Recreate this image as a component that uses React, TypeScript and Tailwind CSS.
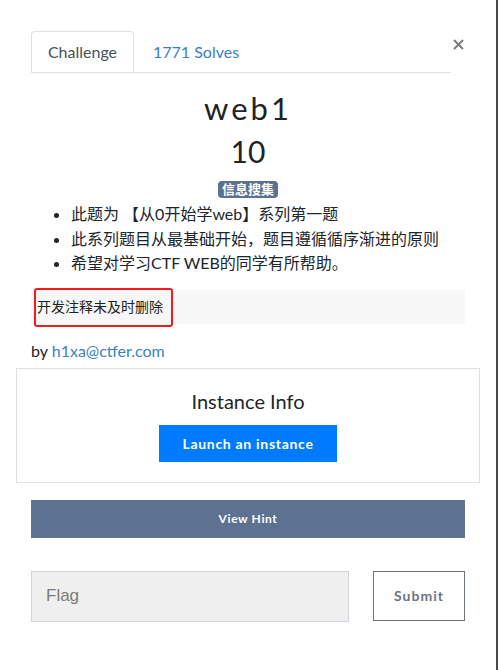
import React from "react";

const tags = ["信息搜集"];

const points = [
  "此题为 【从0开始学web】系列第一题",
  "此系列题目从最基础开始，题目遵循循序渐进的原则",
  "希望对学习CTF WEB的同学有所帮助。",
];

export default function App() {
  return (
    <div className="w-full h-[670px] bg-white border-r-2 border-[#4a4a4a] font-['Lato','Noto_Sans_CJK_SC',sans-serif] text-[#212529] overflow-hidden">
      <div className="px-4 pt-[31px]">
        {/* tabs + close */}
        <div className="flex mx-[15px]">
          <div className="flex flex-1 border-b border-[#dee2e6]">
            <div className="h-[41px] w-[103px] -mb-px flex items-center justify-center bg-white border border-b-0 border-[#dee2e6] rounded-t-[4px] text-[16px] text-[#495057]">
              Challenge
            </div>
            <div className="h-[41px] flex items-center pl-[19px] text-[16px] text-[#3b7fc4]">
              1771 Solves
            </div>
          </div>
          <button className="w-[14px] h-[26px] flex items-center justify-center pt-[1px]">
            <svg width="11" height="11" viewBox="0 0 11 11">
              <path d="M1 1 L10 10 M10 1 L1 10" stroke="#7d7d7d" strokeWidth="2" />
            </svg>
          </button>
        </div>

        <div className="mx-[15px]">
          <h2 className="mt-[17px] text-center text-[31px] leading-[36px] tracking-[3px] font-normal text-[#222]">
            web1
          </h2>
          <h3 className="mt-[7px] text-center text-[30px] leading-[36px] text-[#222]">10</h3>
          <div className="mt-[12px] flex justify-center gap-1">
            {tags.map((t) => (
              <span
                key={t}
                className="h-[17px] px-[4px] rounded-[4px] bg-[#5c7290] text-white text-[13px] font-bold leading-[17px]"
              >
                {t}
              </span>
            ))}
          </div>

          <ul className="mt-[4px] list-disc pl-[40px] text-[16px] leading-[24.5px]">
            {points.map((p) => (
              <li key={p}>{p}</li>
            ))}
          </ul>

          <div className="relative mt-[14px] h-[34px] bg-[#f7f7f7] flex items-center pl-[6px] text-[14px] text-[#222] font-['Noto_Sans_CJK_SC',sans-serif]">
            开发注释未及时删除
            <div className="absolute left-[3px] top-[-2px] w-[139px] h-[39px] border-2 border-[#f01c1c] rounded-[3px]" />
          </div>

          <p className="mt-[15px] text-[16px] leading-[24px]">
            by <a className="text-[#3b7fc4]">h1xa@ctfer.com</a>
          </p>
        </div>

        {/* instance */}
        <div className="mt-[5px] border border-[#dfdfdf] pt-[18px] pb-[20px] flex flex-col items-center">
          <h4 className="text-[20px] leading-[28px] text-[#212529]">Instance Info</h4>
          <button className="mt-[10px] w-[178px] h-[37px] bg-[#007bff] text-white text-[14px] font-bold tracking-[0.7px]">
            Launch an instance
          </button>
        </div>

        <div className="mx-[15px]">
          <button className="mt-[17px] w-full h-[38px] bg-[#5c7290] text-white text-[12px] font-bold tracking-[0.6px]">
            View Hint
          </button>

          <div className="mt-[33px] flex gap-[24px]">
            <input
              placeholder="Flag"
              className="w-[318px] h-[51px] bg-[#efefef] border border-[#ced4da] px-[14px] text-[17px] font-['Liberation_Sans',sans-serif] placeholder:text-[#7b7b7b] outline-none"
            />
            <button className="w-[92px] h-[50px] border border-[#6c757d] text-[#6c757d] text-[14px] font-bold tracking-[1px]">
              Submit
            </button>
          </div>
        </div>
      </div>
    </div>
  );
}
